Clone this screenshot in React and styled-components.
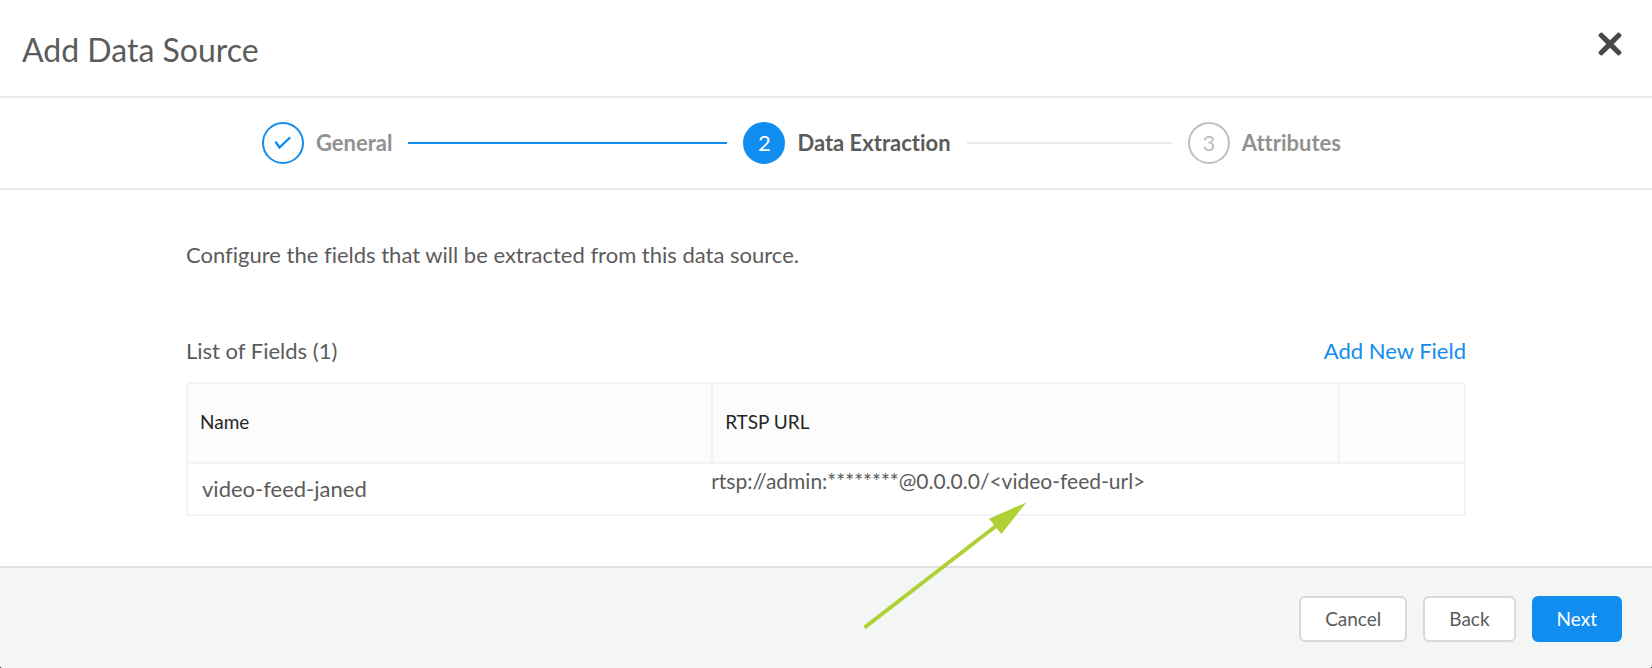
import React from "react";
import styled, { createGlobalStyle } from "styled-components";

const color = {
  blue: "#118def",
  text: "#5b5b5b",
  muted: "#919191",
  ring: "#bfbfbf",
  rule: "#e8e8e8",
  table: "#f0f3f7",
};

const GlobalStyle = createGlobalStyle`
  * { box-sizing: border-box; }
  body {
    margin: 0;
    background: #2b2b2b;
    color: ${color.text};
    font-family: Lato, "Liberation Sans", sans-serif;
    font-size: 22px;
    line-height: 28px;
    font-variant-ligatures: none;
  }
  button { font: inherit; cursor: pointer; }
`;

const Dialog = styled.section`
  display: flex;
  flex-direction: column;
  min-height: 100vh;
  background: #fff;
  border-radius: 0 0 3px 3px;
  overflow: hidden;
`;

const Header = styled.header`
  display: flex;
  justify-content: space-between;
  align-items: flex-start;
  padding: 30px 30px 26px 22px;
  border-bottom: 2px solid ${color.rule};
`;

const Title = styled.h1`
  margin: 0;
  font-size: 32px;
  line-height: 40px;
  font-weight: 400;
`;

const CloseButton = styled.button`
  display: flex;
  padding: 2px 0;
  border: 0;
  background: none;
`;

const Steps = styled.ol`
  display: grid;
  grid-template-columns: 13fr 12fr auto;
  margin: 0;
  padding: 24px 311px 24px 262px;
  list-style: none;
  border-bottom: 2px solid ${color.rule};
`;

const Step = styled.li`
  display: flex;
  align-items: center;
`;

const markerStyles = {
  done: `border: 2px solid ${color.blue}; color: ${color.blue};`,
  current: `border: 2px solid ${color.blue}; background: ${color.blue}; color: #fff;`,
  waiting: `border: 2px solid ${color.ring}; color: ${color.ring};`,
};

const Marker = styled.span`
  display: flex;
  flex: none;
  align-items: center;
  justify-content: center;
  width: 42px;
  height: 42px;
  border-radius: 50%;
  ${({ $state }) => markerStyles[$state]}
`;

const StepLabel = styled.span`
  margin-left: 12px;
  white-space: nowrap;
  font-weight: 700;
  color: ${({ $state }) => ($state === "current" ? color.text : color.muted)};
`;

const Connector = styled.span`
  flex: 1;
  height: 2px;
  margin: 0 16px;
  background: ${({ $done }) => ($done ? color.blue : color.rule)};
`;

const Content = styled.main`
  flex: 1;
  padding: 51px 186px 50px;
`;

const Intro = styled.p`
  margin: 0 0 68px;
`;

const ListHeader = styled.div`
  display: flex;
  justify-content: space-between;
  margin-bottom: 17px;
`;

const ListTitle = styled.h2`
  margin: 0;
  font-size: 22px;
  font-weight: 400;
`;

const LinkButton = styled.a`
  color: ${color.blue};
  text-decoration: none;
`;

const FieldTable = styled.table`
  width: 100%;
  table-layout: fixed;
  border: 2px solid ${color.table};
  border-radius: 6px 6px 0 0;
  border-spacing: 0;
`;

const NameCol = styled.col`
  width: 41%;
`;

const ActionCol = styled.col`
  width: 126px;
`;

const HeadCell = styled.th`
  height: 80px;
  padding: 0 12px 2px;
  text-align: left;
  font-size: 19px;
  font-weight: 400;
  color: #262626;
  background: #fcfcfc;
  border-bottom: 2px solid ${color.table};
  & + & {
    border-left: 2px solid ${color.table};
  }
`;

const Cell = styled.td`
  height: 50px;
  padding: 0 14px;
`;

const UrlCell = styled.td`
  position: relative;
  padding: 3px 0 0;
  vertical-align: top;
  font-size: 21px;
`;

const Pointer = styled.svg`
  position: absolute;
  left: 151px;
  top: 38px;
`;

const Footer = styled.footer`
  display: flex;
  justify-content: flex-end;
  gap: 16px;
  padding: 28px 30px 26px;
  background: #f4f6f6;
  border-top: 2px solid #dfdfdf;
`;

const Button = styled.button`
  height: 46px;
  padding: 0 ${({ $primary }) => ($primary ? 23 : 24)}px;
  border: 2px solid ${({ $primary }) => ($primary ? color.blue : "#d9d9d9")};
  border-radius: 6px;
  background: ${({ $primary }) => ($primary ? color.blue : "#fff")};
  color: ${({ $primary }) => ($primary ? "#fff" : color.text)};
  && { font-size: 19px; }
`;

const steps = [
  { label: "General", state: "done" },
  { label: "Data Extraction", state: "current" },
  { label: "Attributes", state: "waiting" },
];

const fields = [
  { name: "video-feed-janed", url: "rtsp://admin:********@0.0.0.0/<video-feed-url>" },
];

function CloseIcon() {
  return (
    <svg width="24" height="24" viewBox="0 0 24 24" aria-hidden="true">
      <path
        d="M4 .5 12 8.300 20 .5Q21 .2 22 1.200L23.200 2.500Q24 3.400 23.300 4.300L15.700 12 23.300 19.700Q24 20.600 23.200 21.500L22 22.800Q21 23.800 20 23.500L12 15.700 4 23.500Q3 23.800 2 22.800L.8 21.500Q0 20.600.7 19.700L8.300 12 .7 4.300Q0 3.400.8 2.500L2 1.200Q3 .2 4 .5Z"
        fill="#484848"
      />
    </svg>
  );
}

function CheckIcon() {
  return (
    <svg width="18" height="14" viewBox="0 0 18 14" aria-hidden="true">
      <path d="M2 6.5 5.500 11.500 15.500 2" fill="none" stroke="currentColor" strokeWidth="2.4" strokeLinecap="round" />
    </svg>
  );
}

export default function App() {
  return (
    <>
      <GlobalStyle />
      <Dialog role="dialog" aria-labelledby="dialog-title">
        <Header>
          <Title id="dialog-title">Add Data Source</Title>
          <CloseButton type="button" aria-label="Close">
            <CloseIcon />
          </CloseButton>
        </Header>
        <Steps>
          {steps.map(({ label, state }, i) => (
            <Step key={label} aria-current={state === "current" ? "step" : undefined}>
              <Marker $state={state}>{state === "done" ? <CheckIcon /> : i + 1}</Marker>
              <StepLabel $state={state}>{label}</StepLabel>
              {i < steps.length - 1 && <Connector $done={state === "done"} />}
            </Step>
          ))}
        </Steps>
        <Content>
          <Intro>Configure the fields that will be extracted from this data source.</Intro>
          <ListHeader>
            <ListTitle>List of Fields ({fields.length})</ListTitle>
            <LinkButton href="#new-field">Add New Field</LinkButton>
          </ListHeader>
          <FieldTable>
            <colgroup>
              <NameCol />
              <col />
              <ActionCol />
            </colgroup>
            <thead>
              <tr>
                <HeadCell scope="col">Name</HeadCell>
                <HeadCell scope="col">RTSP URL</HeadCell>
                <HeadCell scope="col" aria-label="Actions" />
              </tr>
            </thead>
            <tbody>
              {fields.map((field) => (
                <tr key={field.name}>
                  <Cell>{field.name}</Cell>
                  <UrlCell>
                    {field.url}
                    <Pointer width="166" height="130" viewBox="0 0 166 130" aria-hidden="true">
                      <path d="M2.5 125.5 134 24" stroke="#afd136" strokeWidth="4" />
                      <path d="M164.500 0.300 127 16.700 139.300 32Z" fill="#afd136" />
                    </Pointer>
                  </UrlCell>
                  <Cell />
                </tr>
              ))}
            </tbody>
          </FieldTable>
        </Content>
        <Footer>
          <Button type="button">Cancel</Button>
          <Button type="button">Back</Button>
          <Button type="button" $primary>Next</Button>
        </Footer>
      </Dialog>
    </>
  );
}
